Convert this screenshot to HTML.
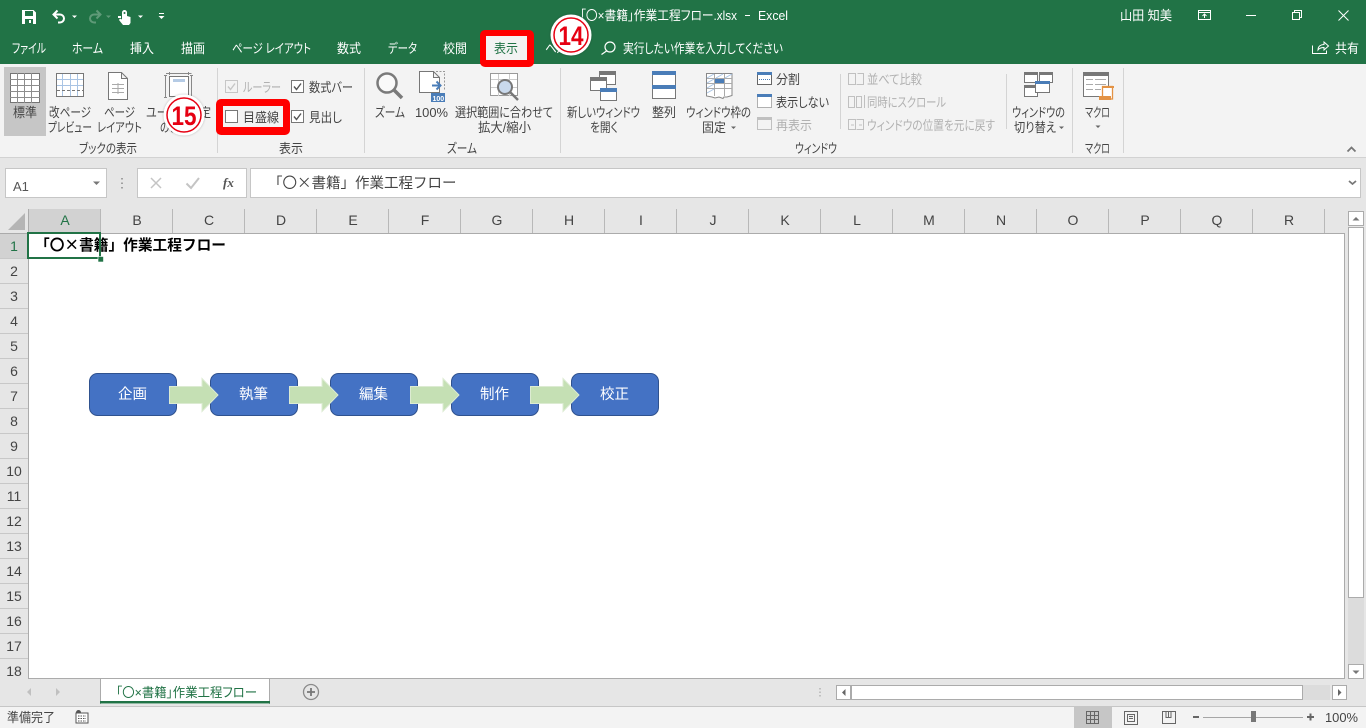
<!DOCTYPE html>
<html lang="ja"><head><meta charset="utf-8"><title>Excel</title>
<style>
html,body{margin:0;padding:0;width:1366px;height:728px;overflow:hidden;background:#e6e6e6}
svg{display:block;position:absolute;left:0;top:0}
text{font-family:"Liberation Sans","Noto Sans CJK JP",sans-serif;font-size:13px;fill:#444;font-feature-settings:"palt"}
.w{fill:#fff}.g{fill:#b1b1b1}.c{text-anchor:middle}
.h{font-size:14px;fill:#444;text-anchor:middle}
.j{font-family:"Noto Sans CJK JP",sans-serif;font-feature-settings:normal}
</style></head><body>
<svg width="1366" height="728" viewBox="0 0 1366 728" xmlns="http://www.w3.org/2000/svg">
<defs><filter id="s" x="-20%" y="-20%" width="140%" height="140%"><feDropShadow dx="0" dy="0" stdDeviation="1" flood-color="#000" flood-opacity=".3"/></filter></defs>
<!-- backgrounds -->
<rect width="1366" height="64" fill="#217346"/>
<rect y="64" width="1366" height="93" fill="#f3f3f3"/>
<rect y="157" width="1366" height="1" fill="#d2d2d2"/>
<rect y="158" width="1366" height="550" fill="#e6e6e6"/>

<!-- QAT -->
<path d="M22 10h11.500l2.500 2.500V24H22z" fill="#fff"/><rect x="25" y="11" width="8" height="5" fill="#217346"/><rect x="25" y="19" width="8" height="5" fill="#217346"/><rect x="29" y="20" width="2" height="3" fill="#fff"/>
<path d="M53.500 14.500H60a4 4 0 0 1 0 8h-2M57.500 10.500l-4 4 4 4" fill="none" stroke="#fff" stroke-width="2"/>
<path d="M72 15.500h5l-2.500 2.500z" fill="#fff"/>
<path d="M100.500 14.500H94a4 4 0 0 0 0 8h2M96.500 10.500l4 4-4 4" fill="none" stroke="#5f9a78" stroke-width="2"/>
<path d="M106 15.500h5l-2.500 2.500z" fill="#5f9a78"/>
<path d="M122 14V12.500a2.500 2.500 0 0 1 5 0V16l3.500 1v6l-1.500 2h-6l-4-5 1-1.500 2 1V14z" fill="#fff"/><circle cx="124.500" cy="13" r="1" fill="#217346"/><rect x="118" y="16" width="3" height="2" fill="#fff"/>
<path d="M138 15.500h5l-2.500 2.500z" fill="#fff"/>
<rect x="159" y="13" width="5" height="1" fill="#fff"/><path d="M158.500 16h6l-3 3z" fill="#fff"/>

<!-- title -->
<text class="w" x="580" y="20" textLength="157" lengthAdjust="spacingAndGlyphs">「〇×書籍」作業工程フロー.xlsx</text>
<rect x="745" y="15" width="5" height="1" fill="#fff"/>
<text class="w" x="758" y="20" textLength="30" lengthAdjust="spacingAndGlyphs">Excel</text>
<text class="w" x="1120" y="20" textLength="52" lengthAdjust="spacingAndGlyphs">山田 知美</text>
<rect x="1198.500" y="10.500" width="12" height="9" fill="none" stroke="#fff"/><path d="M1198 12.500h13M1204.500 18v-4M1202.500 16l2-2 2 2" fill="none" stroke="#fff"/>
<rect x="1246" y="15" width="10" height="1" fill="#fff"/>
<path d="M1292.500 12.500h7v7h-7zM1294.500 12.500v-2h7v7h-2" fill="none" stroke="#fff"/>
<path d="M1338.500 10.500l10 10M1348.500 10.500l-10 10" stroke="#fff" fill="none"/>

<!-- tabs -->
<text class="w" x="12" y="53" textLength="34" lengthAdjust="spacingAndGlyphs">ファイル</text>
<text class="w" x="72" y="53" textLength="31" lengthAdjust="spacingAndGlyphs">ホーム</text>
<text class="w" x="130" y="53" textLength="24" lengthAdjust="spacingAndGlyphs">挿入</text>
<text class="w" x="181" y="53" textLength="24" lengthAdjust="spacingAndGlyphs">描画</text>
<text class="w" x="232" y="53" textLength="79" lengthAdjust="spacingAndGlyphs">ページ レイアウト</text>
<text class="w" x="337" y="53" textLength="24" lengthAdjust="spacingAndGlyphs">数式</text>
<text class="w" x="388" y="53" textLength="29" lengthAdjust="spacingAndGlyphs">データ</text>
<text class="w" x="443" y="53" textLength="24" lengthAdjust="spacingAndGlyphs">校閲</text>
<text class="w" x="545" y="53" textLength="33" lengthAdjust="spacingAndGlyphs">ヘルプ</text>
<path d="M610 42a5 5 0 1 1 0 10 5 5 0 1 1 0-10zM606.500 51l-5 3.500" fill="none" stroke="#fff" stroke-width="1.200"/>
<text class="w" x="623" y="53" textLength="160" lengthAdjust="spacingAndGlyphs">実行したい作業を入力してください</text>
<path d="M1312.500 45.500v8h14v-3M1318 50c0-4 3-5.500 6-5.500V42l4.500 4-4.500 4v-2.500c-2.500 0-4.500.5-6 2.500z" fill="none" stroke="#fff"/>
<text class="w" x="1335" y="53" textLength="24" lengthAdjust="spacingAndGlyphs">共有</text>

<!-- red frame: 表示 tab -->
<rect x="480" y="30" width="54" height="37" rx="5" fill="#f00"/>
<rect x="486" y="36" width="41" height="24" fill="#f3f3f3"/>
<text x="494" y="53" textLength="24" lengthAdjust="spacingAndGlyphs" style="fill:#217346">表示</text>

<!-- ribbon: views -->
<rect x="4" y="67" width="42" height="69" fill="#c6c6c6"/>
<g fill="none" stroke="#757575">
<rect x="10.500" y="73.500" width="29" height="29" fill="#fff"/>
<path d="M10 79.500h30M10 85.500h30M10 91.500h30M10 97.500h30M17.500 73v30M24.500 73v30M31.500 73v30" stroke="#8d8d8d"/>
</g>
<text x="13" y="117" textLength="24" lengthAdjust="spacingAndGlyphs">標準</text>

<rect x="56.500" y="73.500" width="27" height="23" fill="#fff" stroke="#777"/>
<path d="M57 79.500h26M57 85.500h26M62.500 74v22M70.500 74v22M77.500 74v22" stroke="#a9c4e4" fill="none"/>
<path d="M57 90.500h26" stroke="#777" stroke-dasharray="3 2" fill="none"/>
<text x="49" y="117" textLength="42" lengthAdjust="spacingAndGlyphs">改ページ</text>
<text x="48" y="132" textLength="44" lengthAdjust="spacingAndGlyphs">プレビュー</text>

<path d="M108.500 72.500h13l6 6v21h-19zM121.500 72.500v6h6" fill="#fff" stroke="#777"/>
<path d="M112 84.500h12M112 88.500h12M112 92.500h12M118 83v11" stroke="#aaa" fill="none"/>
<text x="104" y="117" textLength="31" lengthAdjust="spacingAndGlyphs">ページ</text>
<text x="97" y="132" textLength="45" lengthAdjust="spacingAndGlyphs">レイアウト</text>

<rect x="169.500" y="76.500" width="19" height="20" fill="#fff" stroke="#777"/>
<rect x="173" y="79" width="12" height="3" fill="#b5cbe5"/>
<path d="M166 73.500h25.500M165.500 76v21M191.500 76v21M169.500 72v3M188.500 72v3M164 75.500h3M190 75.500h3M164 97.500h3M190 97.500h3" stroke="#888" fill="none"/>
<text x="146" y="117" textLength="65" lengthAdjust="spacingAndGlyphs">ユーザー設定</text>
<text x="160" y="132" textLength="36" lengthAdjust="spacingAndGlyphs">のビュー</text>
<text x="79" y="153" textLength="58" lengthAdjust="spacingAndGlyphs">ブックの表示</text>

<!-- separators -->
<path d="M217.500 68v85M364.500 68v85M560.500 68v85M1072.500 68v85M1123.500 68v85" stroke="#d4d4d4" fill="none"/>
<path d="M840.500 74v55M1006.500 74v55" stroke="#d4d4d4" fill="none"/>

<!-- show group -->
<rect x="225.500" y="80.500" width="12" height="12" fill="#f3f3f3" stroke="#c6c6c6"/><path d="M228 86.500l2.500 3 4.500-6" fill="none" stroke="#c6c6c6" stroke-width="1.400"/>
<text class="g" x="243" y="92" textLength="38" lengthAdjust="spacingAndGlyphs">ルーラー</text>
<rect x="291.500" y="80.500" width="12" height="12" fill="#fff" stroke="#777"/><path d="M294 86.500l2.500 3 4.500-6" fill="none" stroke="#555" stroke-width="1.400"/>
<text x="309" y="92" textLength="44" lengthAdjust="spacingAndGlyphs">数式バー</text>
<rect x="216" y="99" width="74" height="36" rx="5" fill="#f00"/>
<rect x="223" y="106" width="60" height="21" fill="#f3f3f3"/>
<rect x="225.500" y="110.500" width="12" height="12" fill="#fff" stroke="#777"/>
<text x="243" y="122" textLength="36" lengthAdjust="spacingAndGlyphs">目盛線</text>
<rect x="291.500" y="110.500" width="12" height="12" fill="#fff" stroke="#777"/><path d="M294 116.500l2.500 3 4.500-6" fill="none" stroke="#555" stroke-width="1.400"/>
<text x="309" y="122" textLength="33" lengthAdjust="spacingAndGlyphs">見出し</text>
<text x="279" y="153" textLength="24" lengthAdjust="spacingAndGlyphs">表示</text>

<!-- zoom group -->
<circle cx="387" cy="83" r="9.500" fill="#f9f9f9" stroke="#7a7a7a" stroke-width="2.500"/>
<path d="M394 90l8 8" stroke="#7a7a7a" stroke-width="3.500" fill="none"/>
<text x="375" y="117" textLength="30" lengthAdjust="spacingAndGlyphs">ズーム</text>
<path d="M419.500 71.500h14v6h6v15h-20zM433.500 71.500l6 6" fill="#fff" stroke="#777"/>
<path d="M436 71.500h8.500v18" stroke="#999" stroke-dasharray="2 1.500" fill="none"/>
<path d="M432 85.500h8M436.500 81.500l4 4-4 4" stroke="#4a7db8" stroke-width="2" fill="none"/>
<rect x="431" y="93" width="14" height="9" fill="#4a7db8"/>
<text x="432.500" y="101" style="font-size:7px;fill:#fff;font-weight:bold">100</text>
<text x="415" y="117" textLength="33" lengthAdjust="spacingAndGlyphs">100%</text>
<rect x="490.500" y="73.500" width="27" height="22" fill="#fff" stroke="#999"/>
<path d="M491 79.500h26M491 87.500h26M498.500 74v22M509.500 74v22" stroke="#ccc" fill="none"/>
<circle cx="505" cy="87" r="7" fill="#c9d9ec" stroke="#777" stroke-width="2"/>
<path d="M510 92l8 8" stroke="#777" stroke-width="2.500" fill="none"/>
<text x="455" y="117" textLength="98" lengthAdjust="spacingAndGlyphs">選択範囲に合わせて</text>
<text x="478" y="132" textLength="53" lengthAdjust="spacingAndGlyphs">拡大/縮小</text>
<text x="447" y="153" textLength="30" lengthAdjust="spacingAndGlyphs">ズーム</text>

<!-- window group -->
<rect x="599.500" y="71.500" width="16" height="13" fill="#fff" stroke="#777"/><rect x="599" y="71" width="17" height="4" fill="#777"/>
<rect x="590.500" y="77.500" width="16" height="13" fill="#fff" stroke="#777"/><rect x="590" y="77" width="17" height="4" fill="#777"/>
<rect x="600.500" y="88.500" width="16" height="12" fill="#fff" stroke="#777"/><rect x="600" y="88" width="17" height="4" fill="#4a7db8"/>
<text x="567" y="117" textLength="73" lengthAdjust="spacingAndGlyphs">新しいウィンドウ</text>
<text x="590" y="132" textLength="28" lengthAdjust="spacingAndGlyphs">を開く</text>
<rect x="652.500" y="71.500" width="23" height="27" fill="#fff" stroke="#777"/>
<rect x="652" y="71" width="24" height="4" fill="#4a7db8"/><rect x="652" y="85" width="24" height="4" fill="#4a7db8"/>
<text x="652" y="117" textLength="24" lengthAdjust="spacingAndGlyphs">整列</text>
<path d="M706.500 73.500h25.500v22l-5 1.500h-3l-1 1.500-4-1.500-4 1-3-1-5.500-1z" fill="#fff" stroke="#888"/>
<path d="M707 78.500h25M707 83.500h25M707 88.500h25M714.500 74v22M724.500 74v22" stroke="#aaa" fill="none"/>
<path d="M707 78l7-4M707 83l7-4M707 88l7-4M707 93l7-4M716 78l7-4M725 78l7-4" stroke="#a9c4e4" fill="none"/>
<rect x="715" y="79" width="9" height="4" fill="#4a7db8"/>
<text x="686" y="117" textLength="65" lengthAdjust="spacingAndGlyphs">ウィンドウ枠の</text>
<text x="702" y="132" textLength="24" lengthAdjust="spacingAndGlyphs">固定</text>
<path d="M731 126.500h5l-2.500 2.500z" fill="#666"/>

<rect x="757.500" y="72.500" width="14" height="12" fill="#fff" stroke="#666"/><rect x="757" y="72" width="15" height="3" fill="#4a7db8"/><path d="M759 79.500h11" stroke="#4a7db8" stroke-dasharray="1 1" fill="none"/>
<text x="776" y="84" textLength="24" lengthAdjust="spacingAndGlyphs">分割</text>
<rect x="757.500" y="94.500" width="14" height="13" fill="#fff" stroke="#666" stroke-dasharray="1 1"/><rect x="757" y="94" width="15" height="3" fill="#4a7db8"/>
<text x="776" y="107" textLength="53" lengthAdjust="spacingAndGlyphs">表示しない</text>
<rect x="757.500" y="117.500" width="14" height="12" fill="#f3f3f3" stroke="#c0c0c0"/><rect x="757" y="117" width="15" height="3" fill="#c0c0c0"/>
<text class="g" x="776" y="130" textLength="36" lengthAdjust="spacingAndGlyphs">再表示</text>

<path d="M848.500 73.500h7v11h-7zM857.500 73.500l6 0v11h-7" fill="none" stroke="#c0c0c0"/>
<text class="g" x="867" y="84" textLength="55" lengthAdjust="spacingAndGlyphs">並べて比較</text>
<path d="M848.500 96.500h6v11h-6zM856.500 96.500h5v11h-5zM864.500 95v13" fill="none" stroke="#c0c0c0"/>
<text class="g" x="867" y="107" textLength="79" lengthAdjust="spacingAndGlyphs">同時にスクロール</text>
<path d="M848.500 119.500h7v10h-7zM856.500 119.500h7v10h-7M851 125h3M859 125h3" fill="none" stroke="#c0c0c0"/>
<text class="g" x="867" y="130" textLength="128" lengthAdjust="spacingAndGlyphs">ウィンドウの位置を元に戻す</text>
<text x="795" y="153" textLength="42" lengthAdjust="spacingAndGlyphs">ウィンドウ</text>

<rect x="1024.500" y="72.500" width="13" height="10" fill="#fff" stroke="#777"/><rect x="1024" y="72" width="14" height="3" fill="#777"/>
<rect x="1039.500" y="72.500" width="13" height="10" fill="#fff" stroke="#777"/><rect x="1039" y="72" width="14" height="3" fill="#777"/>
<rect x="1024.500" y="85.500" width="13" height="11" fill="#fff" stroke="#777"/><rect x="1024" y="85" width="14" height="3" fill="#777"/>
<rect x="1035.500" y="81.500" width="14" height="11" fill="#fff" stroke="#777"/><rect x="1035" y="81" width="15" height="3" fill="#4a7db8"/>
<text x="1012" y="117" textLength="53" lengthAdjust="spacingAndGlyphs">ウィンドウの</text>
<text x="1014" y="132" textLength="42" lengthAdjust="spacingAndGlyphs">切り替え</text>
<path d="M1059 126.500h5l-2.500 2.500z" fill="#666"/>

<rect x="1083.500" y="72.500" width="25" height="24" fill="#fff" stroke="#777"/><rect x="1083" y="72" width="26" height="4" fill="#777"/>
<path d="M1086 79.500h7M1095 79.500h11M1086 84.500h7M1095 84.500h11M1086 89.500h7M1095 89.500h6" stroke="#aaa" fill="none"/>
<rect x="1102.500" y="86.500" width="10" height="12.500" fill="#fff" stroke="#e39244" stroke-width="1.300"/><path d="M1102 86h12v2h-12zM1099 96h12v4h-12z" fill="#e39244"/>
<text x="1085" y="117" textLength="25" lengthAdjust="spacingAndGlyphs">マクロ</text>
<path d="M1095.500 125.500h5l-2.500 2.500z" fill="#666"/>
<text x="1085" y="153" textLength="25" lengthAdjust="spacingAndGlyphs">マクロ</text>
<path d="M1347.500 151.500l4-4 4 4" fill="none" stroke="#777" stroke-width="1.800"/>

<!-- formula bar -->
<rect x="5.500" y="168.500" width="101" height="29" fill="#fff" stroke="#c6c6c6"/>
<text x="13" y="191" style="font-size:13px;fill:#555">A1</text>
<path d="M93 181.500h7l-3.500 3.500z" fill="#777"/>
<path d="M122 178v1.500M122 182.500v1.500M122 187v1.500" stroke="#a0a0a0" stroke-width="2" fill="none"/>
<rect x="137.500" y="168.500" width="109" height="29" fill="#fff" stroke="#c6c6c6"/>
<path d="M151 178l10 10M161 178l-10 10" stroke="#c4c4c4" stroke-width="1.500" fill="none"/>
<path d="M186.500 183.500l4.500 4.500 8-10" stroke="#c4c4c4" stroke-width="2" fill="none"/>
<text x="223" y="187" style="font-family:'Liberation Serif',serif;font-size:13px;font-style:italic;font-weight:bold;fill:#555">fx</text>
<rect x="250.500" y="168.500" width="1110" height="29" fill="#fff" stroke="#c6c6c6"/>
<text class="j" x="268" y="188" style="font-size:14.500px;fill:#444">「〇×書籍」作業工程フロー</text>
<path d="M1349 181l3.500 3 3.500-3" stroke="#777" stroke-width="1.800" fill="none"/>

<!-- sheet -->
<rect x="29" y="234" width="1315" height="444" fill="#fff"/>
<rect x="29" y="209" width="72" height="24" fill="#d2d2d2"/>
<rect x="0" y="234" width="28" height="25" fill="#d2d2d2"/>
<path d="M25 213v17H8z" fill="#b5b5b5"/>
<path d="M0 233.500h1345M28.500 209v470M1344.500 233v446M28 678.500h1317" stroke="#ababab" fill="none"/>
<path d="M100.500 209v24M172.500 209v24M244.500 209v24M316.500 209v24M388.500 209v24M460.500 209v24M532.500 209v24M604.500 209v24M676.500 209v24M748.500 209v24M820.500 209v24M892.500 209v24M964.500 209v24M1036.500 209v24M1108.500 209v24M1180.500 209v24M1252.500 209v24M1324.500 209v24" stroke="#b8b8b8" fill="none"/>
<path d="M0 258.500h28M0 283.500h28M0 308.500h28M0 333.500h28M0 358.500h28M0 383.500h28M0 408.500h28M0 433.500h28M0 458.500h28M0 483.500h28M0 508.500h28M0 533.500h28M0 558.500h28M0 583.500h28M0 608.500h28M0 633.500h28M0 658.500h28" stroke="#c8c8c8" fill="none"/>
<text class="h" x="65" y="225" style="fill:#217346">A</text>
<text class="h" x="137" y="225">B</text><text class="h" x="209" y="225">C</text><text class="h" x="281" y="225">D</text><text class="h" x="353" y="225">E</text><text class="h" x="425" y="225">F</text><text class="h" x="497" y="225">G</text><text class="h" x="569" y="225">H</text><text class="h" x="641" y="225">I</text><text class="h" x="713" y="225">J</text><text class="h" x="785" y="225">K</text><text class="h" x="857" y="225">L</text><text class="h" x="929" y="225">M</text><text class="h" x="1001" y="225">N</text><text class="h" x="1073" y="225">O</text><text class="h" x="1145" y="225">P</text><text class="h" x="1217" y="225">Q</text><text class="h" x="1289" y="225">R</text>
<text class="h" x="14" y="251" style="fill:#217346">1</text>
<text class="h" x="14" y="276">2</text><text class="h" x="14" y="301">3</text><text class="h" x="14" y="326">4</text><text class="h" x="14" y="351">5</text><text class="h" x="14" y="376">6</text><text class="h" x="14" y="401">7</text><text class="h" x="14" y="426">8</text><text class="h" x="14" y="451">9</text><text class="h" x="14" y="476">10</text><text class="h" x="14" y="501">11</text><text class="h" x="14" y="526">12</text><text class="h" x="14" y="551">13</text><text class="h" x="14" y="576">14</text><text class="h" x="14" y="601">15</text><text class="h" x="14" y="626">16</text><text class="h" x="14" y="651">17</text><text class="h" x="14" y="676">18</text>

<text class="j" x="35" y="250" style="font-size:14.700px;font-weight:bold;fill:#000">「〇×書籍」作業工程フロー</text>
<rect x="28" y="233" width="72" height="25" fill="none" stroke="#217346" stroke-width="2"/>
<rect x="98" y="256.500" width="5.500" height="5.500" fill="#217346" stroke="#fff" stroke-width=".6"/>

<!-- shapes -->
<g fill="#4472c4" stroke="#2f528f">
<rect x="89.500" y="373.500" width="87" height="42" rx="8"/>
<rect x="210.500" y="373.500" width="87" height="42" rx="8"/>
<rect x="330.500" y="373.500" width="87" height="42" rx="8"/>
<rect x="451.500" y="373.500" width="87" height="42" rx="8"/>
<rect x="571.500" y="373.500" width="87" height="42" rx="8"/>
</g>
<g fill="#c5e0b4" stroke="#dcebd2">
<path d="M169.500 386.500h32.500v-8l16 16.500-16 16.500v-8h-32.500z"/>
<path d="M289.500 386.500h32.500v-8l16 16.500-16 16.500v-8h-32.500z"/>
<path d="M410.500 386.500h32.500v-8l16 16.500-16 16.500v-8h-32.500z"/>
<path d="M530.500 386.500h32.500v-8l16 16.500-16 16.500v-8h-32.500z"/>
</g>
<text class="w c" x="132.500" y="399" style="font-size:14.500px">企画</text>
<text class="w c" x="253.500" y="399" style="font-size:14.500px">執筆</text>
<text class="w c" x="373.500" y="399" style="font-size:14.500px">編集</text>
<text class="w c" x="494.500" y="399" style="font-size:14.500px">制作</text>
<text class="w c" x="614.500" y="399" style="font-size:14.500px">校正</text>

<!-- vertical scrollbar -->
<rect x="1348" y="598" width="16" height="66" fill="#dcdcdc"/>
<rect x="1348.500" y="211.500" width="15" height="14" fill="#fff" stroke="#ababab"/>
<path d="M1352.500 220.500h7l-3.500-3.500z" fill="#777"/>
<rect x="1348.500" y="227.500" width="15" height="370" fill="#fff" stroke="#ababab"/>
<rect x="1348.500" y="664.500" width="15" height="14" fill="#fff" stroke="#ababab"/>
<path d="M1352.500 670.500h7l-3.500 3.500z" fill="#777"/>

<!-- sheet tabs -->
<path d="M100.500 679v25M269.500 679v25" stroke="#ababab" fill="none"/>
<rect x="101" y="679" width="168" height="25" fill="#fff"/>
<rect x="100" y="701" width="170" height="2.500" fill="#217346"/>
<text x="116" y="697" textLength="141" lengthAdjust="spacingAndGlyphs" style="fill:#217346">「〇×書籍」作業工程フロー</text>
<path d="M31 688v8l-4-4zM56 688v8l4-4z" fill="#c0c0c0"/>
<circle cx="311" cy="692" r="7.500" fill="none" stroke="#8a8a8a" stroke-width="1.300"/>
<path d="M311 688v8M307 692h8" stroke="#777" stroke-width="1.800" fill="none"/>
<path d="M820 688v1.500M820 691.500v1.500M820 695v1.500" stroke="#999" fill="none"/>
<rect x="836.500" y="685.500" width="14" height="14" fill="#fff" stroke="#ababab"/>
<path d="M845.500 689v7l-3.500-3.500z" fill="#666"/>
<rect x="851.500" y="685.500" width="451" height="14" fill="#fff" stroke="#ababab"/>
<rect x="1303" y="685" width="27" height="15" fill="#dcdcdc"/>
<rect x="1332.500" y="685.500" width="14" height="14" fill="#fff" stroke="#ababab"/>
<path d="M1338 689v7l3.500-3.500z" fill="#666"/>
<rect y="706" width="1366" height="22" fill="#f3f3f3"/>
<rect y="706" width="1366" height="1" fill="#c6c6c6"/>

<!-- status bar -->
<text x="7" y="722" textLength="48" lengthAdjust="spacingAndGlyphs">準備完了</text>
<circle cx="78.500" cy="712.500" r="2.500" fill="#555"/>
<path d="M76 713h12v10H76z" fill="#fff" stroke="#555"/>
<path d="M78 716h8M78 718.500h8M78 721h8" stroke="#555" stroke-dasharray="1.500 1" fill="none"/>
<rect x="1074" y="707" width="38" height="21" fill="#c6c6c6"/>
<rect x="1086.500" y="711.500" width="12" height="12" fill="none" stroke="#666"/>
<path d="M1086 715.500h13M1086 719.500h13M1090.500 711v13M1094.500 711v13" stroke="#666" fill="none"/>
<rect x="1124.500" y="711.500" width="13" height="13" fill="none" stroke="#666"/><rect x="1127.500" y="714.500" width="7" height="7" fill="none" stroke="#666"/><path d="M1129 716.500h4M1129 718.500h4" stroke="#666" fill="none"/>
<path d="M1162.500 711.500h13v12h-13zM1168.500 711.500v6h-2.500v-6M1171 711.500v6h-2.500" fill="none" stroke="#666"/>
<rect x="1193" y="716" width="6" height="2" fill="#666"/>
<rect x="1203" y="717" width="100" height="1" fill="#a6a6a6"/>
<rect x="1251" y="711" width="5" height="11" fill="#777"/>
<path d="M1307 717h7M1310.500 713.500v7" stroke="#666" stroke-width="2" fill="none"/>
<text x="1325" y="722" textLength="33" lengthAdjust="spacingAndGlyphs">100%</text>

<!-- numbered badges -->
<circle cx="571" cy="35" r="20.500" fill="#fff" filter="url(#s)"/>
<circle cx="571" cy="35" r="17" fill="#fff" stroke="#e60012" stroke-width="1.500"/>
<text x="571" y="45" class="c" style="font-size:27px;font-weight:bold;fill:#e60012" textLength="25" lengthAdjust="spacingAndGlyphs">14</text>
<circle cx="184" cy="115" r="20.500" fill="#fff" filter="url(#s)"/>
<circle cx="184" cy="115" r="17" fill="#fff" stroke="#e60012" stroke-width="1.500"/>
<text x="184" y="125" class="c" style="font-size:27px;font-weight:bold;fill:#e60012" textLength="25" lengthAdjust="spacingAndGlyphs">15</text>
</svg>
</body></html>
